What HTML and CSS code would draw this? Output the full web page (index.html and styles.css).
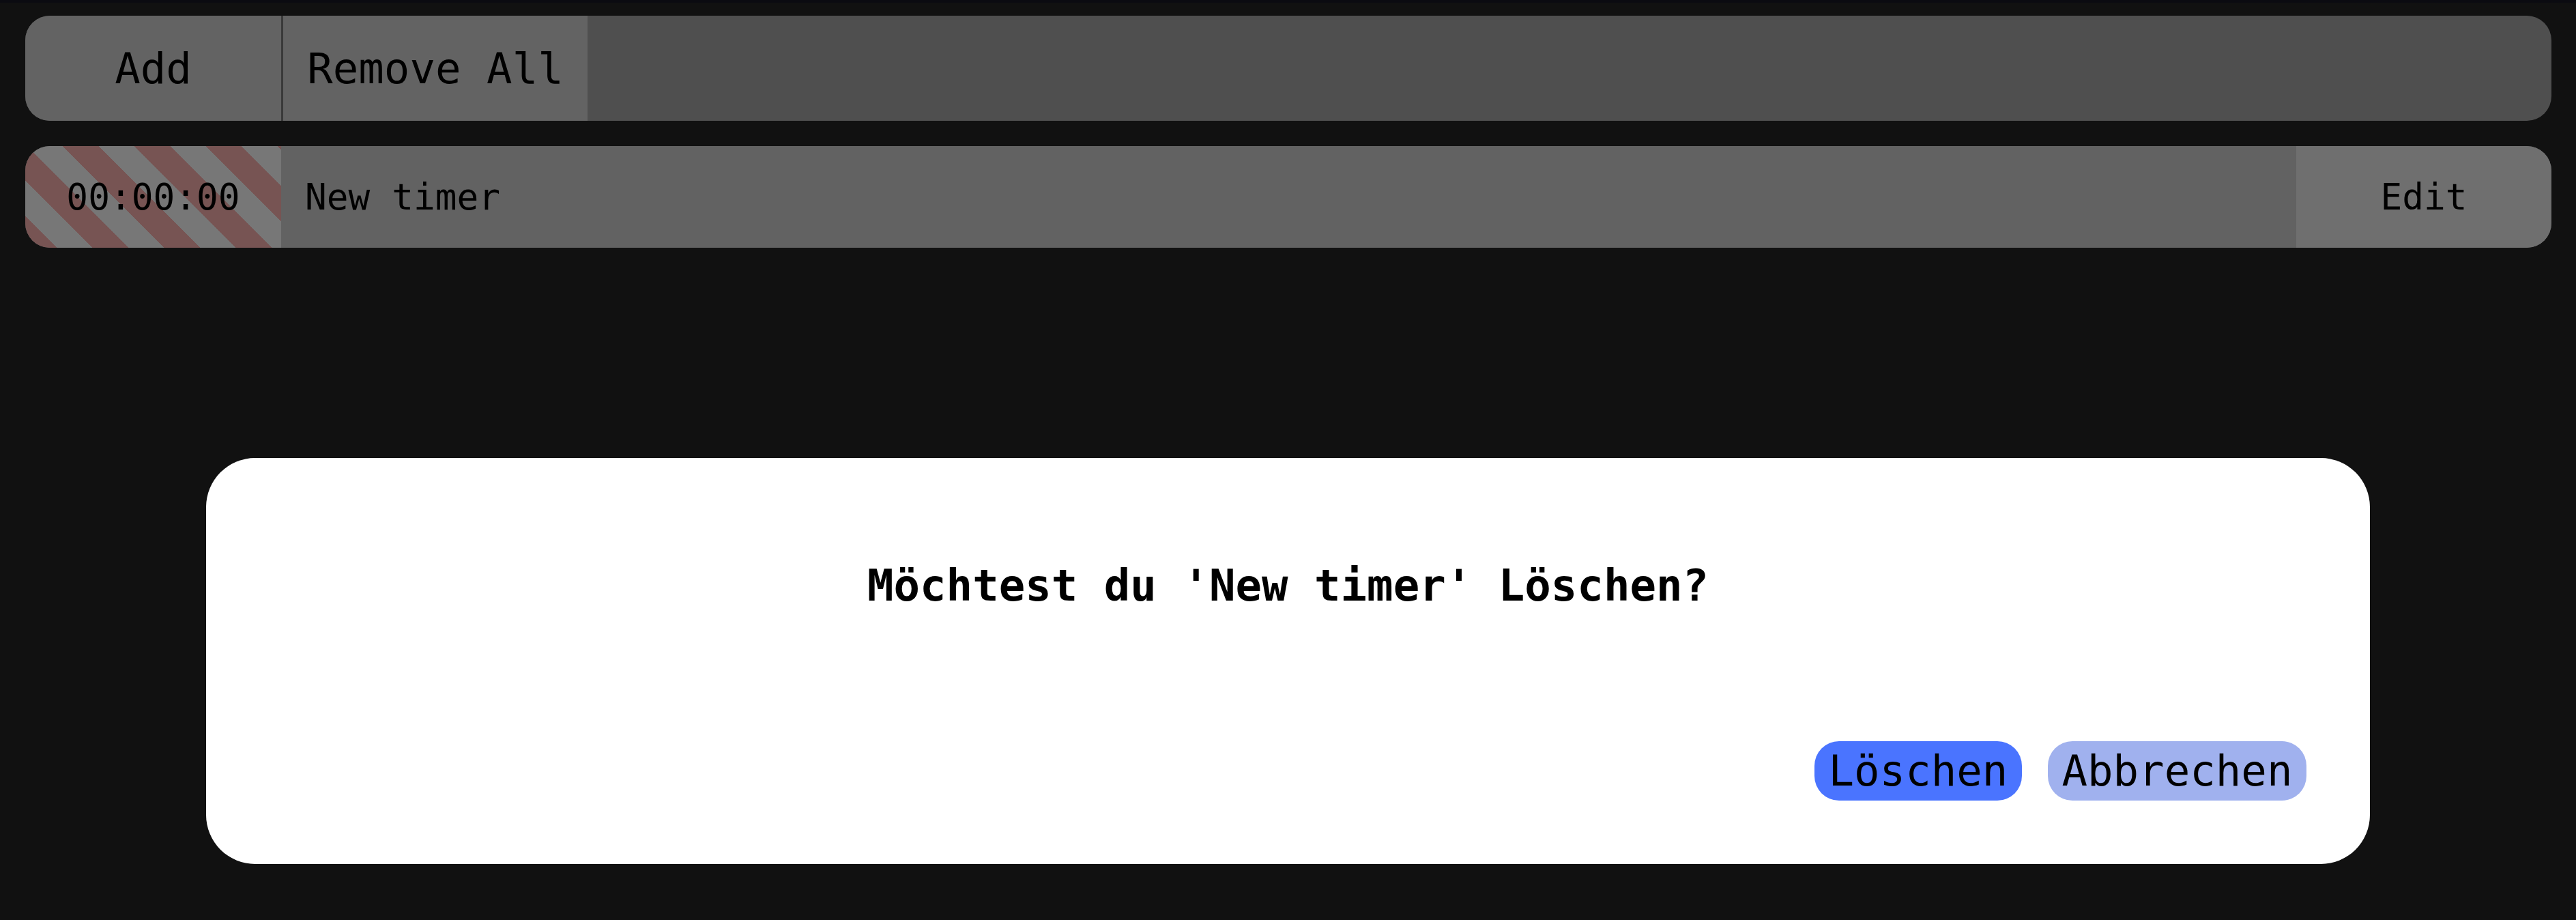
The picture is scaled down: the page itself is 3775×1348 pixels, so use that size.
FILE: index.html
```html
<!DOCTYPE html>
<html lang="de">
<head>
<meta charset="utf-8">
<title>Timer</title>
<link rel="stylesheet" href="styles.css">
</head>
<body>
<div class="topline"></div>
<main class="page">
  <div class="toolbar">
    <button class="tool tool-add">Add</button>
    <button class="tool tool-remove">Remove All</button>
  </div>
  <div class="timer">
    <div class="timer-time">00:00:00</div>
    <div class="timer-name">New timer</div>
    <button class="timer-edit">Edit</button>
  </div>
</main>
<div class="dialog">
  <p class="dialog-title">Möchtest du 'New timer' Löschen?</p>
  <div class="dialog-actions">
    <button class="btn btn-primary">Löschen</button>
    <button class="btn btn-secondary">Abbrechen</button>
  </div>
</div>
</body>
</html>
```

FILE: styles.css
```css
html, body {
  margin: 0;
  padding: 0;
  background: #111111;
  height: 100%;
  overflow: hidden;
}
body {
  font-family: "DejaVu Sans Mono", "Liberation Mono", monospace;
  color: #000;
}
.topline {
  height: 4px;
  background: #0b0b11;
}
.page {
  padding: 19px 36px 0 37px;
  display: flex;
  flex-direction: column;
  gap: 37px;
}
.toolbar {
  height: 154px;
  background: #4f4f4f;
  border-radius: 36px;
  overflow: hidden;
  display: flex;
}
.tool {
  border: none;
  margin: 0;
  background: #636363;
  font-family: inherit;
  font-size: 62.4px;
  color: #000;
  height: 100%;
  padding: 0 35px;
  display: flex;
  align-items: center;
  justify-content: center;
}
.tool-add {
  width: 378px;
  border-right: 3px solid #3a3a3a;
}
.tool-remove {
  width: 446px;
}
.timer {
  height: 149px;
  background: #626262;
  border-radius: 36px;
  overflow: hidden;
  display: flex;
  font-size: 52.8px;
}
.timer-time {
  width: 375px;
  flex: none;
  display: flex;
  align-items: center;
  justify-content: center;
  background: repeating-linear-gradient(45deg,
    #775453 0px, #775453 32.7px,
    #777777 32.7px, #777777 69.8px,
    #775453 69.8px, #775453 74.2px);
}
.timer-name {
  flex: 1;
  display: flex;
  align-items: center;
  padding-left: 35px;
}
.timer-edit {
  width: 374px;
  flex: none;
  border: none;
  margin: 0;
  background: #6f6f6f;
  font-family: inherit;
  font-size: 52.8px;
  color: #000;
}
.dialog {
  position: fixed;
  left: 302px;
  top: 671px;
  width: 3171px;
  height: 595px;
  box-sizing: border-box;
  background: #ffffff;
  border-radius: 72px;
  padding: 150px 93px 93px 93px;
  display: flex;
  flex-direction: column;
}
.dialog-title {
  margin: 0;
  text-align: center;
  font-weight: bold;
  font-size: 64px;
}
.dialog-actions {
  margin-top: auto;
  display: flex;
  justify-content: flex-end;
  gap: 38px;
}
.btn {
  border: none;
  margin: 0;
  font-family: inherit;
  font-size: 62.4px;
  color: #000;
  padding: 7px 20.5px;
  border-radius: 36px;
  line-height: normal;
}
.btn-primary {
  background: #4a74ff;
}
.btn-secondary {
  background: #a0b1ee;
}
```
